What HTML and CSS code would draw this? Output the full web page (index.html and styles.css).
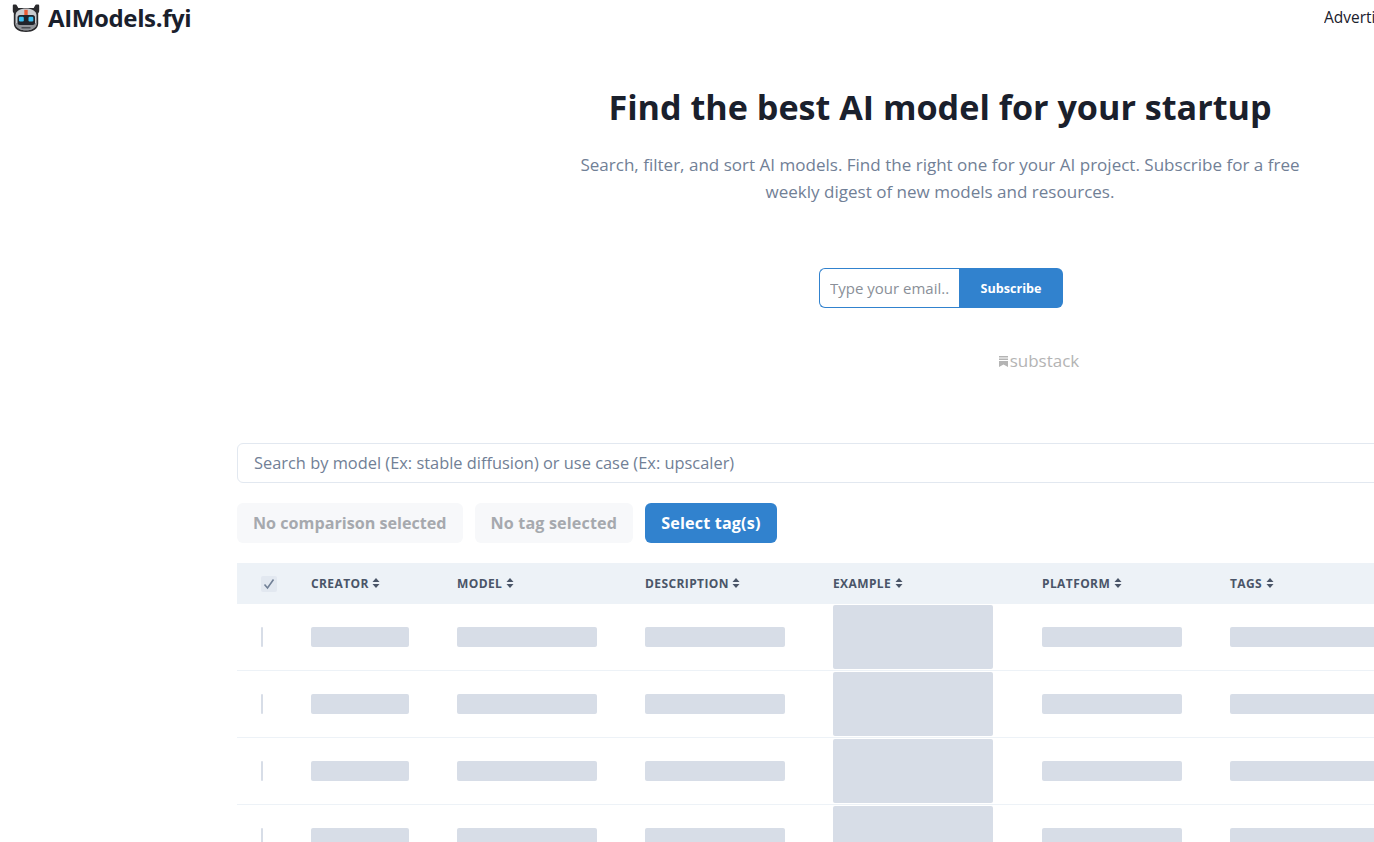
FILE: index.html
```html
<!DOCTYPE html>
<html lang="en">
<head>
<meta charset="utf-8">
<title>AIModels.fyi</title>
<link rel="stylesheet" href="styles.css">
</head>
<body>
<div class="page">
  <header class="topbar">
    <a class="brand" href="#">
      <svg class="robot" width="28" height="28" viewBox="0 0 28 28" aria-hidden="true">
        <path d="M.8 1.500C.8.800 1.300.4 2 .4h1.500c.7 0 1.200.4 1.400 1L6.300 4h15.400l1.400-2.600c.2-.6.700-1 1.400-1H26c.7 0 1.200.4 1.200 1.100V7c0 .9-.3 1.500-1 2v10.500c0 5-5 8.500-12.200 8.500S1.800 24.500 1.800 19.500V9c-.7-.5-1-1.100-1-2z" fill="#2a2a2d"/>
        <path d="M3.500 11C4 7 8 4.500 14 4.500S24 7 24.500 11v8.500c0 3.800-4.500 6.800-10.500 6.800S3.500 23.300 3.500 19.500z" fill="#c9ccd0"/>
        <path d="M3.500 19h21v.5c0 3.800-4.500 6.800-10.500 6.800S3.500 23.300 3.500 19.500z" fill="#8f9297"/>
        <rect x="12.300" y="5.800" width="3.400" height="5.200" fill="#ea5a34"/>
        <rect x="5.500" y="11" width="17.500" height="10" rx="2.500" fill="#20242b"/>
        <rect x="7" y="12.800" width="4.800" height="4.700" rx="1.200" fill="#3cc0f2"/>
        <rect x="16.500" y="12.800" width="4.800" height="4.700" rx="1.200" fill="#3cc0f2"/>
        <rect x="9.500" y="23" width="9" height="1.500" fill="#4a4d53"/>
      </svg>
      <span class="brand-name">AIModels.fyi</span>
    </a>
    <a class="ad-link" href="#">Advertise</a>
  </header>

  <main class="main">
    <section class="hero">
      <h1 class="hero-title">Find the best AI model for your startup</h1>
      <p class="hero-text">Search, filter, and sort AI models. Find the right one for your AI project. Subscribe for a free weekly digest of new models and resources.</p>
      <form class="subscribe">
        <input class="subscribe-input" type="email" placeholder="Type your email...">
        <button class="subscribe-btn" type="button">Subscribe</button>
      </form>
      <div class="substack">
        <svg class="substack-mark" width="9" height="11" viewBox="0 0 9 11" aria-hidden="true">
          <path d="M0 0h9v1.500H0zM0 2.500h9V4H0zM0 5h9v6L4.500 8.500 0 11z" fill="#b4b4b4"/>
        </svg>
        <span>substack</span>
      </div>
    </section>

    <section class="models">
      <input class="search" type="text" placeholder="Search by model (Ex: stable diffusion) or use case (Ex: upscaler)">
      <div class="filters">
        <button class="pill" type="button" disabled>No comparison selected</button>
        <button class="pill pill-tag" type="button" disabled>No tag selected</button>
        <button class="pill pill-primary" type="button">Select tag(s)</button>
      </div>
      <table class="table">
        <colgroup>
          <col class="c-check"><col class="c-creator"><col class="c-wide"><col class="c-wide"><col class="c-example"><col class="c-wide"><col class="c-tags">
        </colgroup>
        <thead>
          <tr>
            <th><span class="check"><svg width="12" height="12" viewBox="0 0 12 12" aria-hidden="true"><path d="M1.500 6.500 4.500 10 10.500 1.500" fill="none" stroke="#718096" stroke-width="1.600"/></svg></span></th>
            <th>Creator <svg class="sort" width="8" height="10" viewBox="0 0 8 10" aria-hidden="true"><path d="M4 0l3.500 4H.5zM4 10L.5 6h7z"/></svg></th>
            <th>Model <svg class="sort" width="8" height="10" viewBox="0 0 8 10" aria-hidden="true"><path d="M4 0l3.500 4H.5zM4 10L.5 6h7z"/></svg></th>
            <th>Description <svg class="sort" width="8" height="10" viewBox="0 0 8 10" aria-hidden="true"><path d="M4 0l3.500 4H.5zM4 10L.5 6h7z"/></svg></th>
            <th>Example <svg class="sort" width="8" height="10" viewBox="0 0 8 10" aria-hidden="true"><path d="M4 0l3.500 4H.5zM4 10L.5 6h7z"/></svg></th>
            <th>Platform <svg class="sort" width="8" height="10" viewBox="0 0 8 10" aria-hidden="true"><path d="M4 0l3.500 4H.5zM4 10L.5 6h7z"/></svg></th>
            <th>Tags <svg class="sort" width="8" height="10" viewBox="0 0 8 10" aria-hidden="true"><path d="M4 0l3.500 4H.5zM4 10L.5 6h7z"/></svg></th>
          </tr>
        </thead>
        <tbody>
          <tr>
            <td><div class="sk sk-check"></div></td><td><div class="sk sk-creator"></div></td><td><div class="sk"></div></td><td><div class="sk"></div></td><td><div class="sk sk-example"></div></td><td><div class="sk"></div></td><td><div class="sk sk-tags"></div></td>
          </tr>
          <tr>
            <td><div class="sk sk-check"></div></td><td><div class="sk sk-creator"></div></td><td><div class="sk"></div></td><td><div class="sk"></div></td><td><div class="sk sk-example"></div></td><td><div class="sk"></div></td><td><div class="sk sk-tags"></div></td>
          </tr>
          <tr>
            <td><div class="sk sk-check"></div></td><td><div class="sk sk-creator"></div></td><td><div class="sk"></div></td><td><div class="sk"></div></td><td><div class="sk sk-example"></div></td><td><div class="sk"></div></td><td><div class="sk sk-tags"></div></td>
          </tr>
          <tr>
            <td><div class="sk sk-check"></div></td><td><div class="sk sk-creator"></div></td><td><div class="sk"></div></td><td><div class="sk"></div></td><td><div class="sk sk-example"></div></td><td><div class="sk"></div></td><td><div class="sk sk-tags"></div></td>
          </tr>
        </tbody>
      </table>
    </section>
  </main>
</div>
</body>
</html>
```

FILE: styles.css
```css
* { box-sizing: border-box; }
html, body { margin: 0; height: 100%; overflow: hidden; background: #fff; }
body { font-family: "Open Sans", "Noto Sans", sans-serif; color: #1a202c; }
.page { width: 1374px; height: 842px; overflow: hidden; }

.topbar { display: flex; justify-content: space-between; align-items: center; height: 36px; padding-left: 12px; white-space: nowrap; }
.brand { display: flex; align-items: center; gap: 8px; color: #1a202c; text-decoration: none; }
.robot { display: block; }
.brand-name { padding-bottom: 2px; font-size: 24px; font-weight: 700; letter-spacing: -0.37px; }
.ad-link { width: 50px; padding-bottom: 2px; overflow: hidden; color: #1a202c; font-size: 15.5px; text-decoration: none; }

.main { width: 1406px; margin-left: 237px; }
.hero { display: flex; flex-direction: column; align-items: center; padding-top: 48px; }
.hero-title { margin: 0; font-size: 34.15px; line-height: 46px; font-weight: 700; white-space: nowrap; }
.hero-text { width: 740px; margin: 21px 0 0; color: #718096; font-size: 17.05px; line-height: 27px; text-align: center; }
.subscribe { display: flex; height: 40px; margin: 63px 0 0 2px; }
.subscribe-input { width: 140px; height: 40px; padding: 0 10px; border: 1px solid #3182ce; border-right: 0; border-radius: 6px 0 0 6px; outline: 0; font: 15px "Open Sans", sans-serif; color: #1a202c; }
.subscribe-input::placeholder { color: #8a8f98; opacity: 1; }
.subscribe-btn { width: 104px; height: 40px; border: 0; border-radius: 0 6px 6px 0; background: #3182ce; color: #fff; font: 700 12.6px "Open Sans", sans-serif; }
.substack { display: flex; align-items: center; gap: 2px; height: 24px; margin: 40px 0 0 198px; color: #b4b4b4; font-size: 17px; }
.substack-mark { display: block; margin-top: 3px; }

.models { margin-top: 71px; }
.search { display: block; width: 100%; height: 40px; padding: 0 16px 2px; border: 1px solid #e2e8f0; border-radius: 6px; outline: 0; font: 16.4px "Open Sans", sans-serif; }
.search::placeholder { color: #718096; opacity: 1; }
.filters { display: flex; gap: 12px; margin-top: 20px; }
.pill { height: 40px; padding: 0 16px; border: 0; border-radius: 6px; background: #f7f8fa; color: #a6a9ae; font: 700 16.15px "Open Sans", sans-serif; }
.pill-tag { letter-spacing: 0.14px; }
.pill-primary { background: #3182ce; color: #fff; letter-spacing: 0.17px; }

.table { width: 1406px; margin-top: 20px; border-collapse: separate; border-spacing: 0; table-layout: fixed; }
.c-check { width: 50px; }
.c-creator { width: 146px; }
.c-wide { width: 188px; }
.c-example { width: 209px; }
.c-tags { width: 625px; }
th { height: 41px; padding: 0 24px; background: #edf2f7; color: #4a5568; font-size: 12px; font-weight: 700; letter-spacing: 0.4px; text-align: left; text-transform: uppercase; white-space: nowrap; }
td { height: 67px; padding: 0 24px; border-bottom: 1px solid #edf2f7; }
.check { display: flex; align-items: center; justify-content: center; width: 16px; height: 16px; border-radius: 2px; background: #e2e8f0; }
.sort { fill: #4a5568; vertical-align: 0; }
.sk { width: 140px; height: 20px; border-radius: 2px; background: #d7dde7; }
.sk-check { width: 2px; }
.sk-creator { width: 98px; }
.sk-example { width: 160px; height: 64px; }
.sk-tags { width: 577px; }
```
